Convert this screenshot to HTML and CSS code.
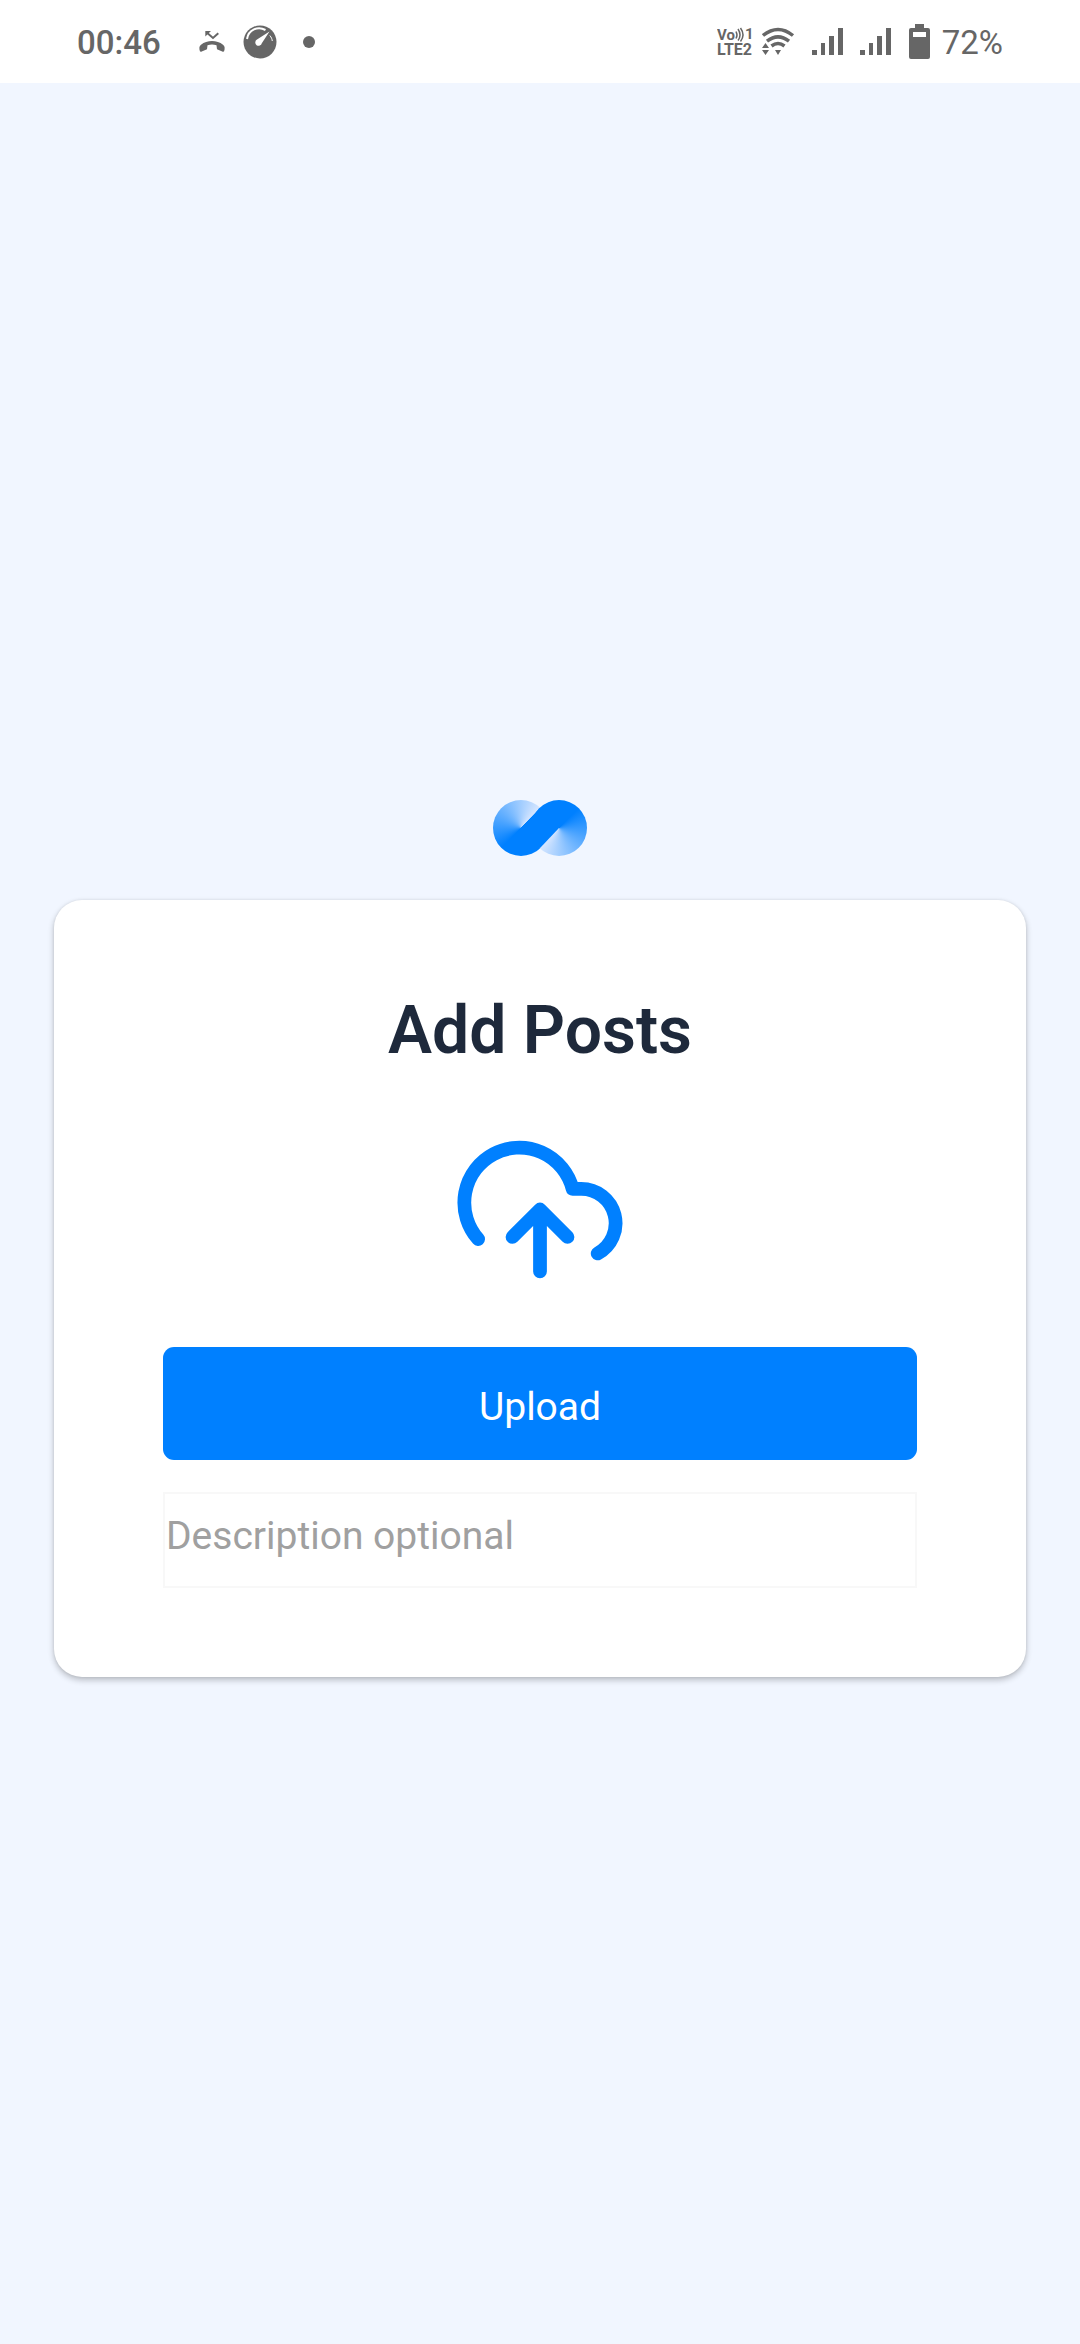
FILE: index.html
```html
<!DOCTYPE html>
<html lang="en">
<head>
<meta charset="utf-8">
<meta name="viewport" content="width=device-width, initial-scale=1">
<title>Add Posts</title>
<link rel="stylesheet" href="styles.css">
</head>
<body>
<header class="status">
  <div class="status-left">
    <span class="clock">00:46</span>
    <svg class="icon-call" width="26" height="22" viewBox="0 0 26 22" fill="currentColor" aria-hidden="true">
      <path d="M1 20.500C0 17.500 0 15.500 2 13.800C8 8.800 18 8.800 24 13.800C26 15.500 26 17.500 25 20.500L23.800 20.800L18 18.300L17.500 14.300C14.500 13.200 11.500 13.200 8.500 14.300L8 18.300L2.200 20.800Z"/>
      <path d="M8 1.800L14 7L19.300 2.300" fill="none" stroke="currentColor" stroke-width="2"/>
      <path d="M6.300 0H12L6.300 5.500Z"/>
    </svg>
    <svg class="icon-gauge" width="34" height="34" viewBox="0 0 34 34" aria-hidden="true">
      <circle cx="17" cy="17" r="16.500" fill="currentColor"/>
      <path d="M4 14C5.500 4.500 15 1 22.500 5" fill="none" stroke="#fff" stroke-width="2"/>
      <path d="M26.500 6.500L18.800 18.200A3.300 3.300 0 1 1 14 14.600Z" fill="#fff"/>
      <path d="M26.800 10.500C28.500 12.500 29 14 29.300 16" fill="none" stroke="#fff" stroke-width="1"/>
    </svg>
    <svg class="icon-dot" width="12" height="12" viewBox="0 0 12 12" fill="currentColor" aria-hidden="true"><circle cx="6" cy="6" r="6"/></svg>
  </div>
  <div class="status-right">
    <svg class="icon-volte" width="38" height="32" viewBox="0 0 38 32" fill="currentColor" aria-label="VoLTE">
      <text x="0" y="14">Vo</text>
      <text x="28" y="13">1</text>
      <text x="0" y="29" class="lte">LTE2</text>
      <path d="M19 5.500Q21 9 19 12.500M21 3Q25 9 21 14.500M23.500 2Q28.500 9 23.500 15.500" fill="none" stroke="currentColor" stroke-width="1.500"/>
    </svg>
    <svg class="icon-wifi" width="34" height="30" viewBox="0 0 34 30" aria-hidden="true">
      <g fill="none" stroke="currentColor" stroke-width="3.500">
        <path d="M2 8.500Q17 -3.500 32 8.500"/>
        <path d="M6 14.200Q17 5.500 28 14.200"/>
        <path d="M10.500 19Q17 14 23.500 19"/>
      </g>
      <path d="M14 23H20L17 28ZM1 21L4.500 16L8 21ZM1 23H8L4.500 28Z" fill="currentColor"/>
    </svg>
    <svg class="icon-signal" width="31" height="28" viewBox="0 0 31 28" fill="currentColor" aria-hidden="true"><path d="M0 22H5V27H0ZM9 15H13V27H9ZM17 8H22V27H17ZM26 0H31V27H26Z"/></svg>
    <svg class="icon-signal" width="31" height="28" viewBox="0 0 31 28" fill="currentColor" aria-hidden="true"><path d="M0 22H5V27H0ZM9 15H13V27H9ZM17 8H22V27H17ZM26 0H31V27H26Z"/></svg>
    <svg class="icon-battery" width="22" height="36" viewBox="0 0 22 36" fill="currentColor" fill-rule="evenodd" aria-hidden="true"><path d="M6 0H15V4H19Q21 4 21 6V33Q21 35 19 35H2Q0 35 0 33V6Q0 4 2 4H6ZM4 8V13H17V8Z"/></svg>
    <span>72%</span>
  </div>
</header>
<main class="page">
  <div class="logo" role="img" aria-label="Logo">
    <span class="lobe lobe-left"></span>
    <span class="lobe lobe-right"></span>
    <svg class="band" width="94" height="56" viewBox="0 0 94 56" aria-hidden="true"><path d="M28 28L46.700 8.300Q56 4 66 28L47.300 47.700Q38 52 28 28Z" fill="#0080ff"/></svg>
  </div>
  <form class="card">
    <h1>Add Posts</h1>
    <svg class="cloud" viewBox="0 0 24 24" fill="none" stroke="currentColor" stroke-width="2" stroke-linecap="round" stroke-linejoin="round" aria-hidden="true">
      <path d="M16 16l-4-4-4 4M12 12v9"/>
      <path d="M20.390 18.390A5 5 0 0 0 18 9h-1.260A8 8 0 1 0 3 16.300"/>
    </svg>
    <button type="button" class="upload">Upload</button>
    <input type="text" class="description" placeholder="Description optional" aria-label="Description optional">
  </form>
</main>
</body>
</html>
```

FILE: styles.css
```css
* {
  box-sizing: border-box;
}

body {
  margin: 0;
  min-height: 100vh;
  display: flex;
  flex-direction: column;
  background: #f1f6ff;
  font-family: Roboto, "Liberation Sans", sans-serif;
}

.status {
  display: flex;
  justify-content: space-between;
  align-items: center;
  height: 83px;
  padding: 0 77px;
  background: #fff;
  color: #666;
  font-size: 33px;
  line-height: 40px;
}

.status-left,
.status-right {
  display: flex;
  align-items: center;
}

.clock {
  font-weight: 500;
}

.status span {
  padding-top: 2px;
}

.icon-call {
  margin-left: 38px;
}

.icon-gauge {
  margin-left: 18px;
}

.icon-dot {
  margin-left: 26px;
}

.icon-volte {
  font-size: 15px;
  font-weight: 700;
}

.lte {
  font-size: 16px;
}

.icon-wifi {
  margin-left: 6px;
}

.icon-signal {
  margin-left: 17px;
}

.icon-battery {
  margin-left: 18px;
  margin-right: 11px;
}

.page {
  flex: 1;
  display: flex;
  flex-direction: column;
  justify-content: center;
  padding: 0 5%;
}

.logo {
  display: grid;
  align-self: center;
  width: 94px;
  margin: 50px 0 44px;
}

.lobe,
.band {
  grid-area: 1 / 1;
}

.lobe {
  width: 56px;
  height: 56px;
  border-radius: 50%;
}

.lobe-left {
  background: conic-gradient(from 45deg, #0080ff 180deg, #d8e7ff 360deg);
}

.lobe-right {
  justify-self: end;
  background: conic-gradient(from 225deg, #0080ff 180deg, #d8e7ff 360deg);
}

.card {
  display: flex;
  flex-direction: column;
  align-items: center;
  padding: 90px 109px 89px;
  border-radius: 28px;
  background: #fff;
  box-shadow: 0 3px 6px rgba(0, 0, 0, 0.24), 0 0 3px rgba(0, 0, 0, 0.08);
}

h1 {
  margin: 0;
  color: #1e293b;
  font-size: 66px;
  font-weight: 600;
  line-height: 82px;
}

.cloud {
  width: 166px;
  height: 165px;
  margin: 55px 0;
  color: #0080ff;
}

.upload {
  width: 100%;
  height: 113px;
  padding: 6px 0 0;
  border: 0;
  border-radius: 11px;
  background: #0080ff;
  color: #fff;
  font: inherit;
  font-size: 39px;
}

.description {
  width: 100%;
  height: 96px;
  margin-top: 32px;
  padding: 0 1px 8px;
  border: 2px solid #f8f8f8;
  background: transparent;
  color: #1e293b;
  font: inherit;
  font-size: 39px;
}

.description::placeholder {
  color: #a0a0a0;
  opacity: 1;
}
```
